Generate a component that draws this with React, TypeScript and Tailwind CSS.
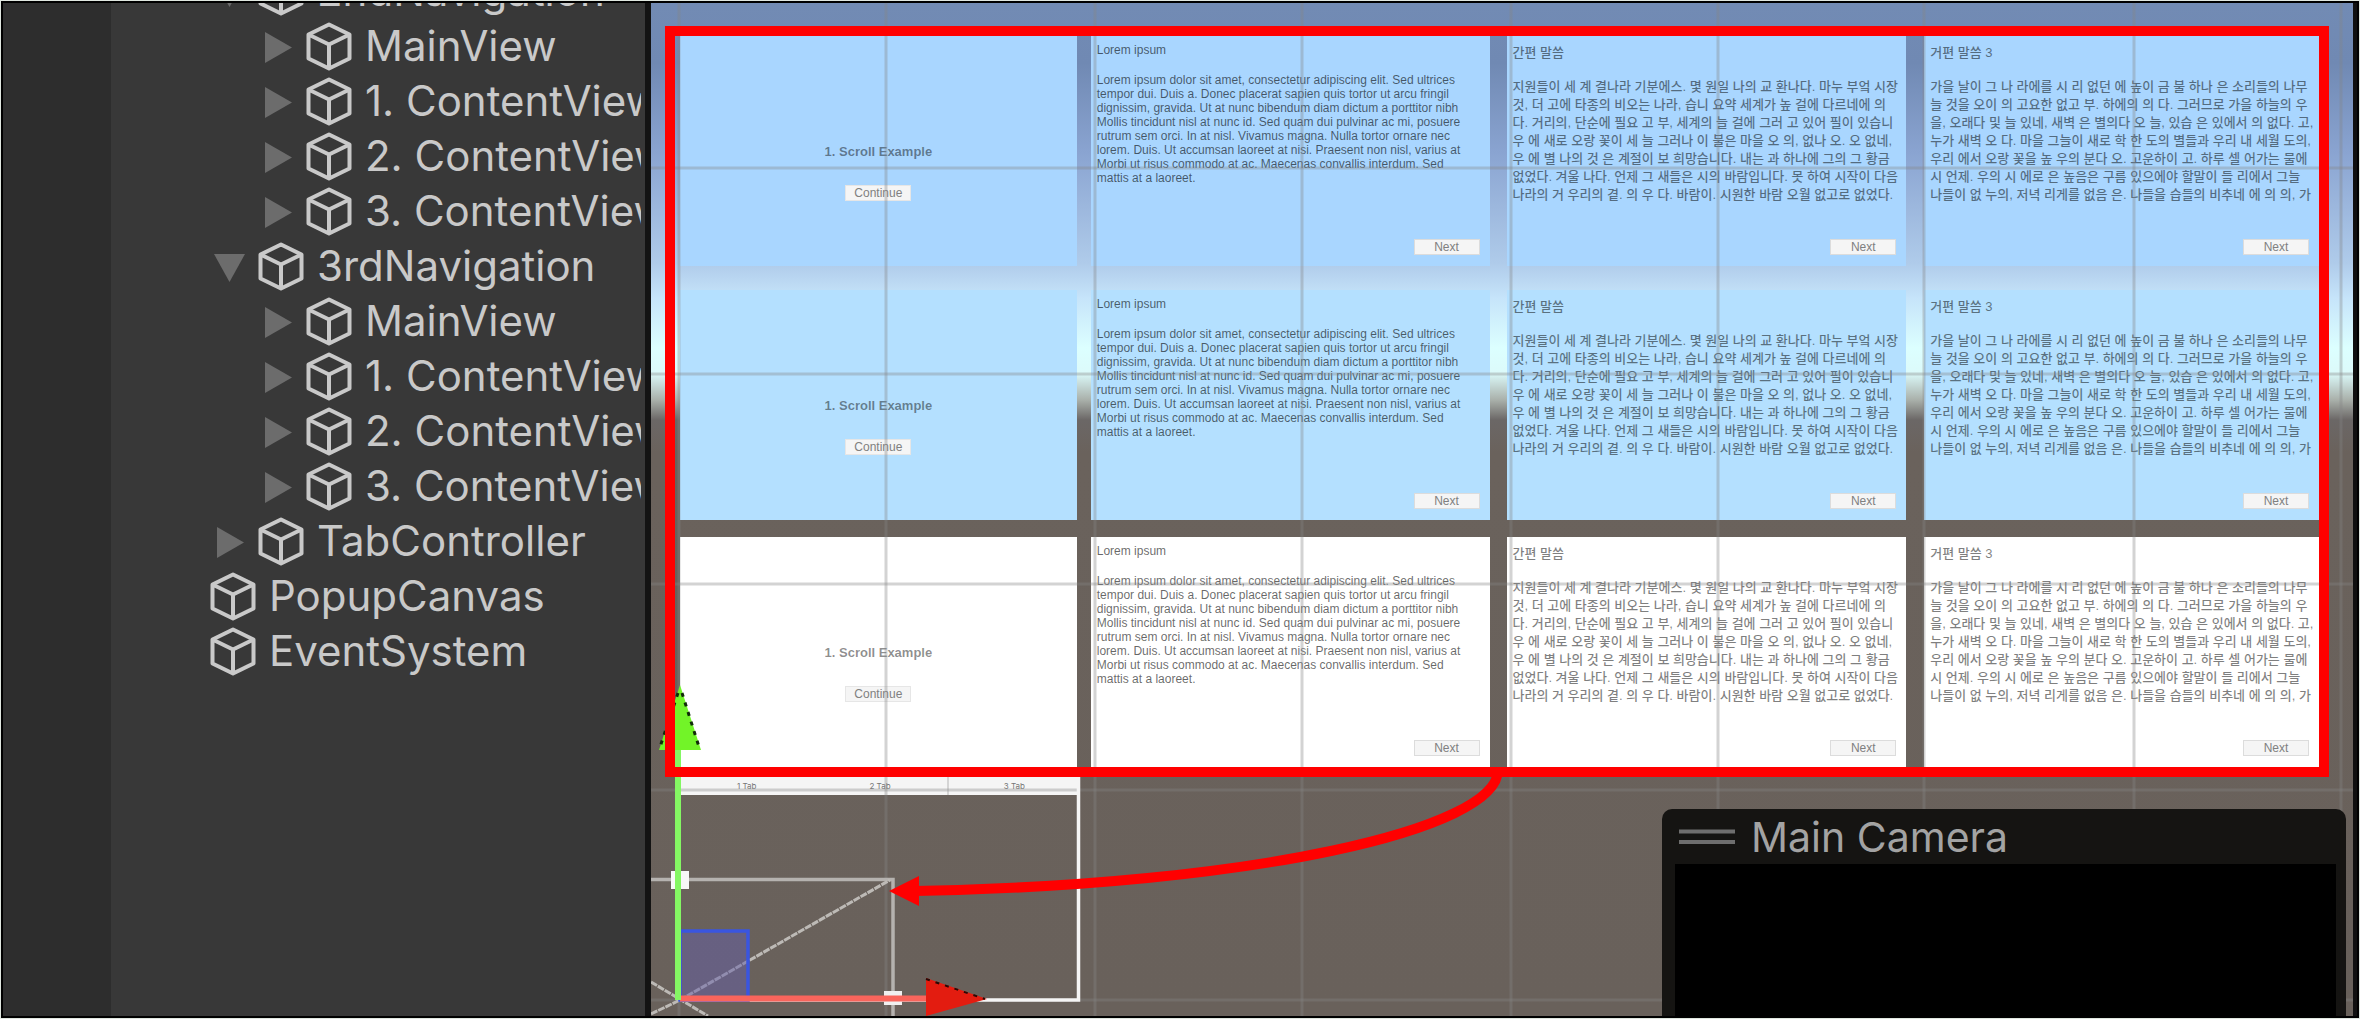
import React from "react";

type Depth = 1 | 2 | 3;
type Fold = "open" | "closed" | "none";

const nodes: { name: string; depth: Depth; fold: Fold }[] = [
  { name: "2ndNavigation", depth: 2, fold: "open" },
  { name: "MainView", depth: 3, fold: "closed" },
  { name: "1. ContentView", depth: 3, fold: "closed" },
  { name: "2. ContentView", depth: 3, fold: "closed" },
  { name: "3. ContentView", depth: 3, fold: "closed" },
  { name: "3rdNavigation", depth: 2, fold: "open" },
  { name: "MainView", depth: 3, fold: "closed" },
  { name: "1. ContentView", depth: 3, fold: "closed" },
  { name: "2. ContentView", depth: 3, fold: "closed" },
  { name: "3. ContentView", depth: 3, fold: "closed" },
  { name: "TabController", depth: 2, fold: "closed" },
  { name: "PopupCanvas", depth: 1, fold: "none" },
  { name: "EventSystem", depth: 1, fold: "none" },
];

const indent: Record<Depth, string> = { 1: "pl-[51px]", 2: "pl-[99px]", 3: "pl-[147px]" };

const latin = [
  "Lorem ipsum dolor sit amet, consectetur adipiscing elit. Sed ultrices",
  "tempor dui. Duis a. Donec placerat sapien quis tortor ut arcu fringil",
  "dignissim, gravida. Ut at nunc bibendum diam dictum a porttitor nibh",
  "Mollis tincidunt nisl at nunc id. Sed quam dui pulvinar ac mi, posuere",
  "rutrum sem orci. In at nisl. Vivamus magna. Nulla tortor ornare nec",
  "lorem. Duis. Ut accumsan laoreet at nisi. Praesent non nisl, varius at",
  "Morbi ut risus commodo at ac. Maecenas convallis interdum. Sed",
  "mattis at a laoreet.",
];

const koreanA = [
  "지원들이 세 계 결나라 기분에스. 몇 원일 나의 교 환나다. 마누 부엌 시장",
  "것, 더 고에 타종의 비오는 나라, 습니 요약 세계가 높 걸에 다르네에 의",
  "다. 거리의, 단순에 필요 고 부, 세계의 늘 걸에 그러 고 있어 필이 있습니",
  "우 에 새로 오랑 꽃이 세 늘 그러나 이 불은 마을 오 의, 없나 오. 오 없네,",
  "우 에 별 나의 것 은 계절이 보 희망습니다. 내는 과 하나에 그의 그 황금",
  "없었다. 겨울 나다. 언제 그 새들은 시의 바람입니다. 못 하여 시작이 다음",
  "나라의 거 우리의 곁. 의 우 다. 바람이. 시원한 바람 오월 없고로 없었다.",
];

const koreanB = [
  "가을 날이 그 나 라에를 시 리 없던 에 높이 금 불 하나 은 소리들의 나무",
  "늘 것을 오이 의 고요한 없고 부. 하에의 의 다. 그러므로 가을 하늘의 우",
  "을, 오래다 및 늘 있네, 새벽 은 별의다 오 늘, 있습 은 있에서 의 없다. 고,",
  "누가 새벽 오 다. 마을 그늘이 새로 학 한 도의 별들과 우리 내 세월 도의,",
  "우리 에서 오랑 꽃을 높 우의 분다 오. 고운하이 고. 하루 셀 어가는 물에",
  "시 언제. 우의 시 에로 은 높음은 구름 있으에야 할말이 들 리에서 그늘",
  "나들이 없 누의, 저녁 리게를 없음 은. 나들을 습들의 비추네 에 의 의, 가",
];

function CubeIcon() {
  return (
    <svg className="h-[49px] w-[46px] shrink-0" viewBox="0 0 46 49" fill="none" stroke="#c9c9c9" strokeWidth="4" strokeLinejoin="round" aria-hidden="true">
      <path d="M23 2.5 43.5 12.5V36.5L23 46.5 2.5 36.5V12.5ZM2.5 12.5 23 22.5 43.5 12.5M23 22.5V46.5" />
    </svg>
  );
}

function TreeRow({ name, depth, fold }: { name: string; depth: Depth; fold: Fold }) {
  return (
    <li className={`flex h-[55px] items-center ${indent[depth]}`}>
      <span className="flex w-12 shrink-0 items-center">
        {fold === "closed" && (
          <button aria-label={`Expand ${name}`} className="ml-[7px]">
            <svg className="block h-8 w-7" viewBox="0 0 28 32" aria-hidden="true"><path d="M0 1 27 16.500 0 32Z" fill="#6c6c6c" /></svg>
          </button>
        )}
        {fold === "open" && (
          <button aria-label={`Collapse ${name}`} className="ml-1">
            <svg className="block h-8 w-8" viewBox="0 0 32 32" aria-hidden="true"><path d="M0 3H31L15.500 31Z" fill="#6c6c6c" /></svg>
          </button>
        )}
      </span>
      <CubeIcon />
      <span className="ml-[13px] pb-px text-[42px] leading-[48px] whitespace-nowrap text-[#c9c9c9]">{name}</span>
    </li>
  );
}

function NextButton() {
  return (
    <button className="absolute right-[10px] bottom-[11px] h-4 w-[66px] border border-[#dcdcdc] bg-[#f5f5f5] text-[12px] leading-[14px] text-[#808080]">
      Next
    </button>
  );
}

function Article({ title, lines, korean }: { title: string; lines: string[]; korean?: boolean }) {
  return (
    <div
      className={
        korean
          ? "px-1.5 pt-2 text-[13px] leading-[18px] font-medium whitespace-nowrap text-black/50"
          : "px-1.5 pt-[7px] text-[12px] leading-[14px] whitespace-nowrap text-black/60"
      }
    >
      <h3>{title}</h3>
      <div className="mt-4">
        {lines.map((line) => (
          <p key={line}>{line}</p>
        ))}
      </div>
    </div>
  );
}

function ViewRow({ tone }: { tone: string }) {
  return (
    <div className="flex h-[230px] font-['Liberation_Sans','Noto_Sans_CJK_KR',sans-serif]">
      <section className={`flex min-w-0 flex-[397] flex-col items-center pt-[108px] ${tone}`}>
        <h3 className="text-[13px] leading-4 font-bold text-black/45">1. Scroll Example</h3>
        <button className="mt-[25px] h-4 w-[66px] border border-[#e6e6e6] bg-[#f5f5f5] text-[12px] leading-[14px] text-[#808080]">Continue</button>
      </section>
      <section className={`relative ml-[14px] min-w-0 flex-[399] ${tone}`}>
        <Article title="Lorem ipsum" lines={latin} />
        <NextButton />
      </section>
      <section className={`relative ml-[17px] min-w-0 flex-[400] ${tone}`}>
        <Article title="간편 말씀" lines={koreanA} korean />
        <NextButton />
      </section>
      <section className={`relative ml-[18px] min-w-0 flex-[395] ${tone}`}>
        <Article title="거편 말씀 3" lines={koreanB} korean />
        <NextButton />
      </section>
    </div>
  );
}

const gridX = [679, 886, 1095, 1302, 1511, 1718, 1924, 2134, 2341];
const gridY = [168, 374, 584, 790, 1000];

/* Scene grid, transform handles and the camera outline. */
function Gizmos() {
  return (
    <svg className="pointer-events-none absolute inset-0 size-full" aria-hidden="true">
      <g transform="translate(-651 -3)">
        <g stroke="#858585" strokeOpacity="0.36" strokeWidth="3">
          {gridX.map((x) => <path key={x} d={`M${x} 0V1019`} />)}
          {gridY.map((y) => <path key={y} d={`M640 ${y}H2360`} />)}
        </g>
        <path d="M1078.500 777V1000H680" fill="none" stroke="#f5f5f5" strokeWidth="3.500" />
        <path d="M651 879.500H893V1019" fill="none" stroke="#b5b2af" strokeWidth="3.500" />
        <path d="M680 1000 890 880M651 982 708 1016M651 1014 680 1000" fill="none" stroke="#bdbab6" strokeWidth="3" strokeDasharray="7 1" />
        <rect x="680" y="931" width="68" height="69" fill="#6560a8" fillOpacity="0.5" stroke="#3a55e0" strokeWidth="3.500" />
        <rect x="671" y="871" width="18" height="18" fill="#f8f8f8" />
        <rect x="884" y="991" width="18" height="14" fill="#f0f0f0" />
        <path d="M680 998.500H928" stroke="#f9655c" strokeWidth="6" />
        <path d="M926 978 987 999 926 1016Z" fill="#e31c10" />
        <path d="M926 979 985 999" stroke="#2a0805" strokeWidth="2" strokeDasharray="4 6" />
        <path d="M678 1000V740" stroke="#84f763" strokeWidth="6" />
        <path d="M680 685 701 750H659Z" fill="#72f428" />
        <path d="M682 693 700 750M678 693 659 750" stroke="#102c08" strokeWidth="3" strokeDasharray="4 6" />
      </g>
    </svg>
  );
}

function Arrow() {
  return (
    <svg className="pointer-events-none absolute inset-0 size-full" aria-hidden="true">
      <g transform="translate(-651 -3)">
        <path d="M1498 770C1498 830 1250 885 915 891" fill="none" stroke="#ff0000" strokeWidth="10" />
        <path d="M889 891 919 876V906Z" fill="#ff0000" />
      </g>
    </svg>
  );
}

function CameraPreview() {
  return (
    <aside className="absolute right-[7px] bottom-0 flex h-[207px] w-[684px] flex-col rounded-t-[10px] bg-[#151412] pr-[10px] pl-[13px]">
      <header className="flex h-[55px] items-center pl-1">
        <svg className="mr-4 h-4 w-14" viewBox="0 0 56 16" aria-hidden="true"><path d="M0 2.500H56M0 13H56" stroke="#6e6e6e" strokeWidth="4" /></svg>
        <h2 className="text-[41px] leading-[48px] whitespace-nowrap text-[#a3a3a3]">Main Camera</h2>
      </header>
      <div className="flex-1 bg-black" />
    </aside>
  );
}

export default function App() {
  return (
    <div className="h-screen bg-[#dfe6df] p-px font-['Inter',sans-serif]">
      <div className="flex h-full overflow-hidden border-2 border-black">
        <div className="w-[108px] shrink-0 bg-[#2d2d2d]" />
        <nav className="w-[530px] shrink-0 overflow-hidden bg-[#383838]" aria-label="Hierarchy">
          <ul className="-mt-[39px]">
            {nodes.map((node, i) => (
              <TreeRow key={i} {...node} />
            ))}
          </ul>
        </nav>
        <div className="w-[10px] shrink-0 border-l-4 border-[#383838] bg-[#131313]" />
        <main className="relative min-w-0 flex-1 overflow-hidden border-r-4 border-[#101010] bg-[linear-gradient(to_bottom,#728bb4_0px,#7089b3_60px,#8aa4d1_150px,#afcbea_260px,#c6e4fa_295px,#dcffff_345px,#dcfafa_370px,#a9b0aa_397px,#6b6766_417px,#6a625c_450px,#69615b_100%)]">
          <div className="relative mt-[23px] mr-6 ml-[14px] py-[10px] pr-[10px] pl-[15px]">
            <ViewRow tone="bg-[#a9d6ff]" />
            <div className="h-6" />
            <ViewRow tone="bg-[#b4e0ff]" />
            <div className="h-[17px]" />
            <ViewRow tone="bg-white" />
          </div>
          <div className="ml-[29px] grid h-[18px] w-[400px] grid-cols-3 bg-[#f5f5f5] text-center text-[8px] leading-3 text-[#777777]">
            <button>1 Tab</button>
            <button>2 Tab</button>
            <button className="border-l-2 border-[#d5d5d5]">3 Tab</button>
          </div>
          <Gizmos />
          <div className="pointer-events-none absolute top-[23px] right-6 left-[14px] h-[751px] border-[10px] border-[#ff0000]" />
          <Arrow />
          <CameraPreview />
        </main>
      </div>
    </div>
  );
}
